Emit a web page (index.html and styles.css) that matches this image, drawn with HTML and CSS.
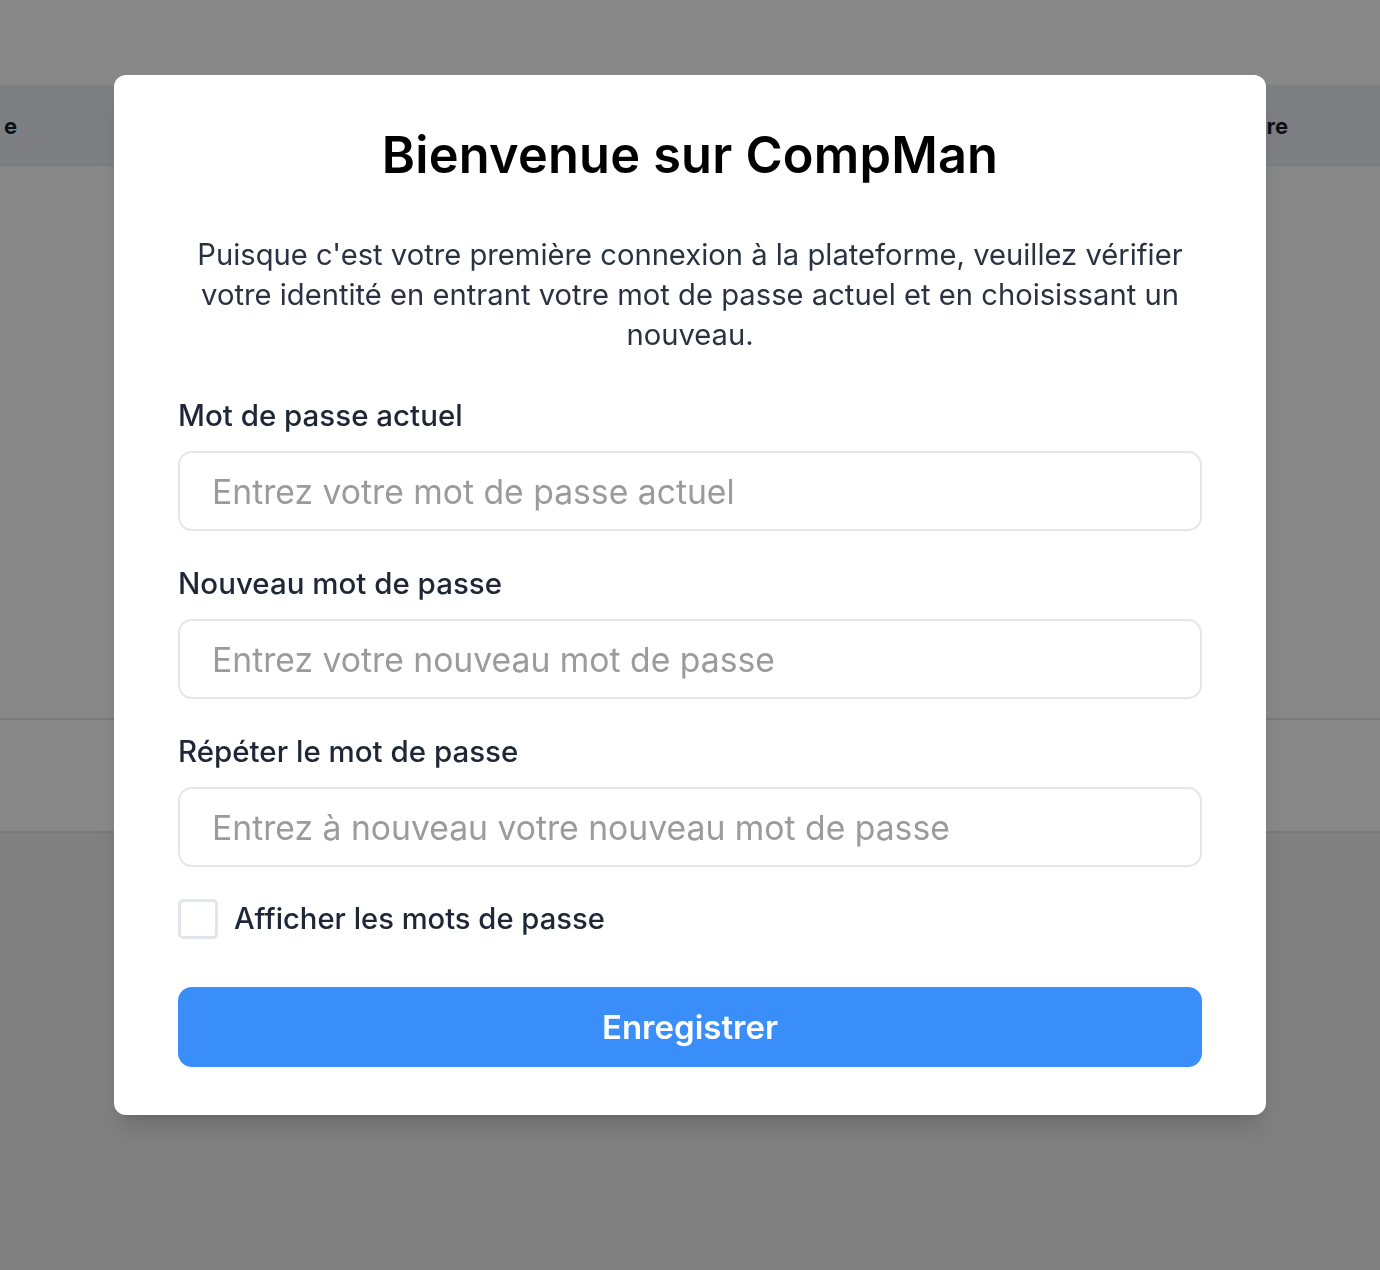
FILE: index.html
```html
<!DOCTYPE html>
<html lang="fr">
<head>
<meta charset="utf-8">
<title>CompMan</title>
<link rel="stylesheet" href="styles.css">
</head>
<body>
<div class="page">
  <div class="topbar"></div>
  <div class="table">
    <div class="thead">
      <div class="th th-left"><span>Rôle</span></div>
      <div class="th th-right"><span>Membre</span></div>
    </div>
    <div class="tbody"></div>
    <div class="trow"></div>
  </div>
  <div class="rest"></div>
</div>

<div class="overlay">
  <div class="modal">
    <h1 class="title">Bienvenue sur CompMan</h1>
    <p class="intro">Puisque c'est votre première connexion à la plateforme, veuillez vérifier votre identité en entrant votre mot de passe actuel et en choisissant un nouveau.</p>
    <form class="form">
      <div class="field">
        <label class="label" for="cur">Mot de passe actuel</label>
        <input class="input" id="cur" type="password" placeholder="Entrez votre mot de passe actuel">
      </div>
      <div class="field">
        <label class="label" for="new">Nouveau mot de passe</label>
        <input class="input" id="new" type="password" placeholder="Entrez votre nouveau mot de passe">
      </div>
      <div class="field">
        <label class="label" for="rep">Répéter le mot de passe</label>
        <input class="input" id="rep" type="password" placeholder="Entrez à nouveau votre nouveau mot de passe">
      </div>
      <label class="check">
        <span class="box"></span>
        <span class="check-text">Afficher les mots de passe</span>
      </label>
      <button class="btn" type="button">Enregistrer</button>
    </form>
  </div>
</div>
</body>
</html>
```

FILE: styles.css
```css
* { box-sizing: border-box; }
html, body { margin: 0; padding: 0; }
body {
  width: 1380px;
  height: 1270px;
  overflow: hidden;
  font-family: Inter, "Open Sans", sans-serif;
  background: #f2f2f2;
}
.page { display: flex; flex-direction: column; height: 1270px; }
.topbar { height: 85px; background: #ffffff; }
.table { background: #ffffff; }
.thead {
  height: 81px;
  background: #eef0f6;
  border-bottom: 1px solid #e3e5ea;
  display: flex;
  align-items: center;
  justify-content: space-between;
}
.th {
  font-weight: 700;
  font-size: 22px;
  color: #1a1d2b;
  white-space: nowrap;
  display: flex;
  padding-top: 2px;
}
.th-left {
  width: 14px;
  margin-left: 3px;
  overflow: hidden;
  justify-content: flex-end;
}
.th-right { width: 92px; justify-content: flex-start; margin-right: 89px; }
.tbody { height: 554px; border-bottom: 2px solid #e3e4ea; }
.trow { height: 113px; border-bottom: 2px solid #e3e4ea; }
.rest { flex: 1; }

.overlay {
  position: fixed;
  inset: 0;
  background: rgba(0, 0, 0, 0.47);
  display: flex;
  justify-content: center;
  align-items: flex-start;
  padding-top: 75px;
}
.modal {
  width: 1152px;
  height: 1040px;
  background: #ffffff;
  border-radius: 12px;
  padding: 44px 64px 48px;
  box-shadow: 0 20px 25px -5px rgba(0,0,0,0.12), 0 8px 10px -6px rgba(0,0,0,0.12);
  display: flex;
  flex-direction: column;
}
.title {
  margin: 0;
  text-align: center;
  font-size: 50.5px;
  line-height: 72px;
  font-weight: 600;
  color: #000000;
  letter-spacing: 0.2px;
}
.intro {
  margin: 44px 0 0;
  text-align: center;
  font-size: 29.2px;
  line-height: 40px;
  color: #2a3242;
}
.form { display: flex; flex-direction: column; margin-top: 40px; }
.field { display: flex; flex-direction: column; margin-bottom: 32px; }
.label {
  font-size: 29.5px;
  line-height: 40px;
  font-weight: 500;
  color: #1f2737;
  margin-bottom: 16px;
}
.input {
  height: 80px;
  border: 2px solid #e3e6ef;
  border-radius: 14px;
  padding: 0 32px;
  font-family: inherit;
  font-size: 33.7px;
  color: #1f2737;
  outline: none;
  background: #fff;
}
.input::placeholder { color: #9b9b9b; }
.check {
  display: flex;
  align-items: center;
  gap: 16px;
  height: 40px;
}
.box {
  width: 40px;
  height: 40px;
  border: 3px solid #e1e5ee;
  border-radius: 5px;
  background: #fff;
}
.check-text {
  font-size: 29.2px;
  line-height: 40px;
  font-weight: 500;
  color: #1f2737;
}
.btn {
  margin-top: 48px;
  height: 80px;
  border: none;
  border-radius: 14px;
  background: #3a8ef9;
  color: #ffffff;
  font-family: inherit;
  font-size: 33px;
  font-weight: 600;
  cursor: pointer;
}
```
